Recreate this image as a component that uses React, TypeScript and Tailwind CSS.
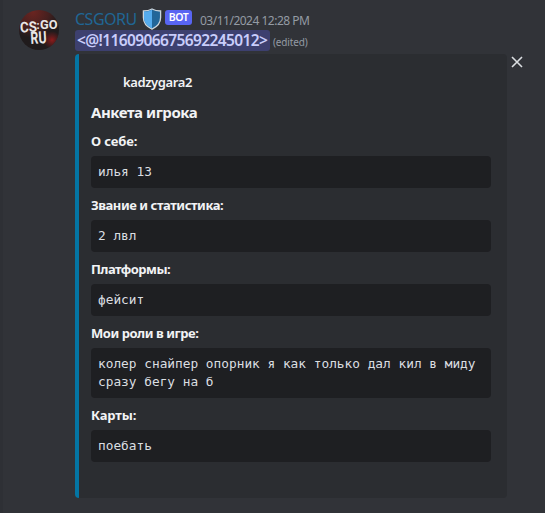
import React from 'react';

type Field = { label: string; lines: string[]; spacing: string };

const fields: Field[] = [
  { label: 'О себе:', lines: ['илья 13'], spacing: 'tracking-[-0.1px]' },
  { label: 'Звание и статистика:', lines: ['2 лвл'], spacing: 'tracking-[-0.45px]' },
  { label: 'Платформы:', lines: ['фейсит'], spacing: 'tracking-[-0.55px]' },
  {
    label: 'Мои роли в игре:',
    lines: ['колер снайпер опорник я как только дал кил в миду', 'сразу бегу на б'],
    spacing: 'tracking-[-0.45px]',
  },
  { label: 'Карты:', lines: ['поебать'], spacing: 'tracking-[-0.15px]' },
];

function Avatar() {
  return (
    <svg className="block h-10 w-10" viewBox="0 0 40 40">
      <defs>
        <clipPath id="round"><circle cx="20" cy="20" r="20" /></clipPath>
        <radialGradient id="red" cx="0.35" cy="0.05" r="0.65">
          <stop offset="0" stopColor="#6b2420" />
          <stop offset="0.6" stopColor="#46201f" />
          <stop offset="1" stopColor="#201b1c" />
        </radialGradient>
        <radialGradient id="spot">
          <stop offset="0" stopColor="#8d1b1b" />
          <stop offset="1" stopColor="#7d1b1b" stopOpacity="0" />
        </radialGradient>
      </defs>
      <g clipPath="url(#round)">
        <rect width="40" height="40" fill="url(#red)" />
        <circle cx="33" cy="30" r="9" fill="url(#spot)" />
        <g fill="#e9e6e6" fontWeight="700" fontFamily="Roboto, sans-serif">
          <text x="1" y="22" fontSize="14.5" textLength="17" lengthAdjust="spacingAndGlyphs" transform="rotate(-3 9 16)">CS</text>
          <text x="17.5" y="19" fontSize="11">:</text>
          <text x="21" y="18.5" fontSize="13" textLength="17.5" lengthAdjust="spacingAndGlyphs">GO</text>
          <text x="11.5" y="33.5" fontSize="17" textLength="16" lengthAdjust="spacingAndGlyphs" transform="rotate(-3 19 28)">RU</text>
        </g>
      </g>
    </svg>
  );
}

function Shield() {
  return (
    <svg className="ml-[5px] block h-[22px] w-[20px]" viewBox="0 0 20 22">
      <path d="M10 1C7.5 2.4 4.5 3 1.4 3v6.5c0 5 3.3 9.2 8.6 11.6 5.3-2.4 8.6-6.6 8.6-11.6V3C15.5 3 12.5 2.4 10 1Z" fill="#226699" stroke="#ccd6dd" strokeWidth="1.3" />
      <path d="M10 1.7C7.7 3 4.8 3.6 2 3.6v6c0 4.6 3 8.5 8 10.8Z" fill="#55acee" />
    </svg>
  );
}

export default function App() {
  return (
    <main className="flex h-[513px] w-[545px] overflow-hidden border-l-[3px] border-[#2e3035] bg-[#313338] font-['Noto_Sans',sans-serif] text-[#f2f3f5]">
      <div className="ml-4 mt-[10px] w-14 shrink-0"><Avatar /></div>
      <div className="flex w-[432px] shrink-0 flex-col">
        <header className="mt-2 flex h-[22px] items-center whitespace-nowrap">
          <span className="w-[62px] text-[16px] leading-[22px] tracking-[-0.5px] text-[#206694]">CSGORU</span>
          <Shield />
          <span className="mb-[3px] ml-[3px] flex h-[15px] w-[27px] items-center justify-center rounded-[3px] bg-[#5865f2] text-[10.5px] font-semibold leading-[15px] tracking-[-0.5px] text-white">BOT</span>
          <span className="ml-2 mt-[3px] text-[12px] leading-4 tracking-[-0.5px] text-[#949ba4]">03/11/2024 12:28 PM</span>
        </header>
        <div className="flex h-[21px] items-center whitespace-nowrap">
          <span className="h-[21px] w-[195px] rounded-[3px] bg-[#3d406f] pl-[2px] text-[15.5px] font-semibold leading-[21px] tracking-[-0.62px] text-[#c9cdfb]">&lt;@!1160906675692245012&gt;</span>
          <span className="ml-[3px] mt-[3px] text-[10px] leading-4 tracking-[-0.15px] text-[#949ba4]">(edited)</span>
        </div>
        <article className="mt-[3px] h-[444px] w-[432px] rounded-[4px] border-l-4 border-[#0475a3] bg-[#2b2d31] pl-3 pr-4 pt-[19px]">
          <div className="pl-8 text-[13px] font-semibold leading-[18px] tracking-[-0.4px]">kadzygara2</div>
          <h1 className="mt-[10px] pb-px text-[15px] font-bold leading-[22px] tracking-[-0.45px]">Анкета игрока</h1>
          {fields.map((field) => (
            <section key={field.label}>
              <h2 className="mb-[6px] mt-2 whitespace-nowrap text-[13px] font-bold leading-[18px]">
                <span className={field.spacing}>{field.label}</span>
              </h2>
              <div className="rounded-[4px] bg-[#1e1f22] px-[7px] py-[7px] font-['DejaVu_Sans_Mono',monospace] text-[12.8px] leading-[18px] text-[#dbdee1]">
                {field.lines.map((line) => <p key={line} className="whitespace-pre">{line}</p>)}
              </div>
            </section>
          ))}
        </article>
      </div>
      <button aria-label="Close" className="ml-1 mt-[55px] flex h-[14px] w-[12px] items-center justify-center">
        <svg className="h-3 w-3 shrink-0" viewBox="0 0 12 12" stroke="#dbdee1" strokeWidth="1.6"><path d="M1 1l10 10M11 1L1 11" /></svg>
      </button>
    </main>
  );
}
